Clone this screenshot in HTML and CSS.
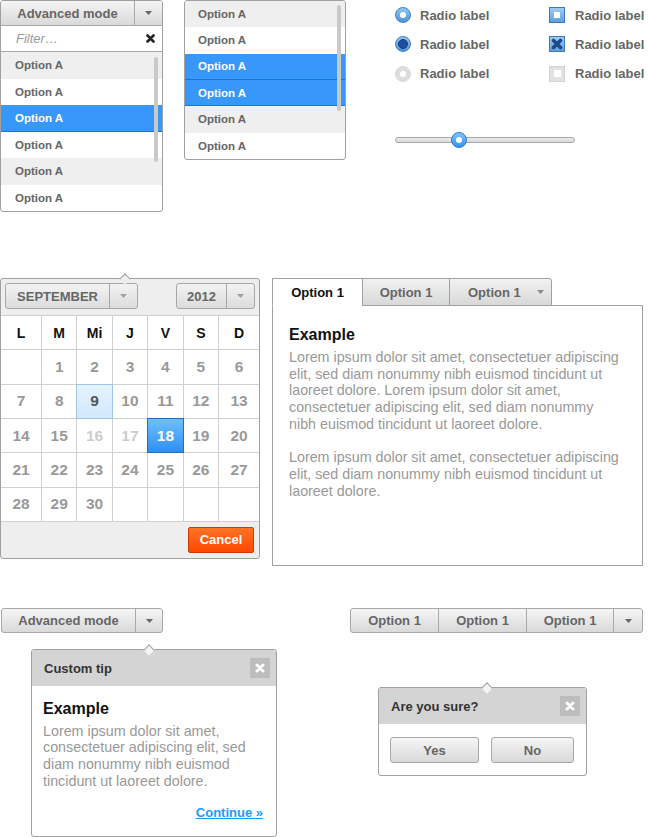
FILE: index.html
```html
<!DOCTYPE html>
<html>
<head>
<meta charset="utf-8">
<link rel="stylesheet" href="styles.css">
</head>
<body>
<div class="page">
  <div class="row1">
    <div class="combo">
      <div class="combo-head">
        <span class="seg grow">Advanced mode</span>
        <span class="seg caret"><svg width="7" height="4" viewBox="0 0 7 4"><path d="M0 0H7L3.5 4Z"/></svg></span>
      </div>
      <div class="filter">
        <span>Filter…</span>
        <svg class="x-dark" width="9" height="9" viewBox="0 0 9 9"><path d="M1.5 1.5L7.5 7.5M7.5 1.5L1.5 7.5"/></svg>
      </div>
      <div class="opt alt">Option A</div>
      <div class="opt">Option A</div>
      <div class="opt sel">Option A</div>
      <div class="opt">Option A</div>
      <div class="opt alt">Option A</div>
      <div class="opt">Option A</div>
      <div class="scroll"></div>
    </div>

    <div class="list">
      <div class="opt alt">Option A</div>
      <div class="opt">Option A</div>
      <div class="opt sel">Option A</div>
      <div class="opt sel">Option A</div>
      <div class="opt alt">Option A</div>
      <div class="opt">Option A</div>
      <div class="scroll"></div>
    </div>

    <div class="controls">
      <div class="choices">
        <div class="choice"><span class="radio"></span>Radio label</div>
        <div class="choice"><span class="check"></span>Radio label</div>
        <div class="choice"><span class="radio on"></span>Radio label</div>
        <div class="choice"><span class="check on"><svg width="12" height="12" viewBox="0 0 12 12"><path d="M2.5 2.5L9.5 9.5M9.5 2.5L2.5 9.5"/></svg></span>Radio label</div>
        <div class="choice"><span class="radio off"></span>Radio label</div>
        <div class="choice"><span class="check off"></span>Radio label</div>
      </div>
      <div class="slider">
        <div class="track"></div>
        <div class="thumb"></div>
      </div>
    </div>
  </div>

  <div class="row2">
    <div class="cal">
      <div class="cal-head">
        <div class="select month">
          <span class="seg grow">SEPTEMBER</span>
          <span class="seg caret"><svg width="7" height="4" viewBox="0 0 7 4"><path d="M0 0H7L3.5 4Z"/></svg></span>
        </div>
        <div class="select year">
          <span class="seg grow">2012</span>
          <span class="seg caret"><svg width="7" height="4" viewBox="0 0 7 4"><path d="M0 0H7L3.5 4Z"/></svg></span>
        </div>
      </div>
      <div class="cal-grid">
        <span class="dow">L</span><span class="dow">M</span><span class="dow">Mi</span><span class="dow">J</span><span class="dow">V</span><span class="dow">S</span><span class="dow">D</span>
        <span></span><span>1</span><span>2</span><span>3</span><span>4</span><span>5</span><span>6</span>
        <span>7</span><span>8</span><span class="today">9</span><span>10</span><span>11</span><span>12</span><span>13</span>
        <span>14</span><span>15</span><span class="dim">16</span><span class="dim">17</span><span class="pick">18</span><span>19</span><span>20</span>
        <span>21</span><span>22</span><span>23</span><span>24</span><span>25</span><span>26</span><span>27</span>
        <span>28</span><span>29</span><span>30</span><span></span><span></span><span></span><span></span>
      </div>
      <div class="cal-foot">
        <div class="cancel">Cancel</div>
      </div>
    </div>

    <div class="tabs">
      <div class="tab-row">
        <div class="tab active">Option 1</div>
        <div class="tab t2">Option 1</div>
        <div class="tab t3">Option 1<svg width="7" height="4" viewBox="0 0 7 4"><path d="M0 0H7L3.5 4Z"/></svg></div>
      </div>
      <div class="tab-body">
        <h2 class="heading">Example</h2>
        <p class="text">Lorem ipsum dolor sit amet, consectetuer adipiscing elit, sed diam nonummy nibh euismod tincidunt ut laoreet dolore. Lorem ipsum dolor sit amet, consectetuer adipiscing elit, sed diam nonummy nibh euismod tincidunt ut laoreet dolore.</p>
        <p class="text">Lorem ipsum dolor sit amet, consectetuer adipiscing elit, sed diam nonummy nibh euismod tincidunt ut laoreet dolore.</p>
      </div>
    </div>
  </div>

  <div class="row3">
    <div class="tip-demo">
      <div class="btn adv">
        <span class="seg grow">Advanced mode</span>
        <span class="seg caret"><svg width="7" height="4" viewBox="0 0 7 4"><path d="M0 0H7L3.5 4Z"/></svg></span>
      </div>
      <div class="pop tip">
        <div class="pop-head">
          <span>Custom tip</span>
          <span class="close"><svg width="10" height="10" viewBox="0 0 10 10"><path d="M2 2L8 8M8 2L2 8"/></svg></span>
        </div>
        <div class="tip-body">
          <h2 class="heading">Example</h2>
          <p class="text">Lorem ipsum dolor sit amet, consectetuer adipiscing elit, sed diam nonummy nibh euismod tincidunt ut laoreet dolore.</p>
          <div class="more"><a class="link" href="#">Continue »</a></div>
        </div>
      </div>
    </div>

    <div class="grp-demo">
      <div class="btn group">
        <span class="seg s1">Option 1</span>
        <span class="seg s2">Option 1</span>
        <span class="seg s3">Option 1</span>
        <span class="seg caret"><svg width="7" height="4" viewBox="0 0 7 4"><path d="M0 0H7L3.5 4Z"/></svg></span>
      </div>
      <div class="pop confirm">
        <div class="pop-head">
          <span>Are you sure?</span>
          <span class="close"><svg width="10" height="10" viewBox="0 0 10 10"><path d="M2 2L8 8M8 2L2 8"/></svg></span>
        </div>
        <div class="confirm-body">
          <div class="btn yes"><span class="seg grow">Yes</span></div>
          <div class="btn no"><span class="seg grow">No</span></div>
        </div>
      </div>
    </div>
  </div>
</div>
</body>
</html>
```

FILE: styles.css
```css
* { box-sizing: border-box; margin: 0; padding: 0; }
body {
  margin: 0;
  font-family: "Liberation Sans", Arial, Helvetica, sans-serif;
  color: #666;
  background: #fff;
}
.page { width: 643px; display: flex; flex-direction: column; }

/* shared */
.seg { display: flex; align-items: center; justify-content: center; }
.grow { flex: 1; }
.caret { border-left: 1px solid #a8a8a8; }
.caret svg { fill: #666; }

/* row 1 */
.row1 { display: flex; align-items: flex-start; height: 212px; }
.combo {
  flex-shrink: 0;
  width: 163px; height: 212px;
  border: 1px solid #a0a0a0; border-radius: 3px;
  overflow: hidden; position: relative; background: #fff;
}
.combo-head {
  display: flex; height: 25px;
  border-bottom: 1px solid #a8a8a8;
  background: linear-gradient(#f5f5f5, #d9d9d9);
  font-size: 13px; font-weight: bold; color: #666;
}
.combo-head .caret { width: 28px; }
.filter {
  height: 26px; border-bottom: 1px solid #a8a8a8;
  display: flex; align-items: center; justify-content: space-between;
  padding: 0 7px 0 15px;
  font-size: 13px; font-style: italic; color: #999;
}
.x-dark { stroke: #222; stroke-width: 2.6; stroke-linecap: round; fill: none; }
.opt {
  height: 26.5px; display: flex; align-items: center;
  padding-left: 14px;
  font-size: 11.5px; font-weight: bold; color: #666;
}
.opt.alt { background: #efefef; }
.opt.sel { background: #3797fb; color: #fff; border-bottom: 1px solid #1f73cc; }
.scroll { position: absolute; width: 4px; background: #c9c9c9; border-radius: 2px; }
.combo .scroll { right: 4px; top: 56px; height: 105px; }
.list {
  flex-shrink: 0;
  width: 162px; height: 160px; margin-left: 21px;
  border: 1px solid #a0a0a0; border-radius: 3px;
  overflow: hidden; position: relative; background: #fff;
}
.list .opt { height: 26.33px; padding-left: 13px; }
.list .scroll { right: 4px; top: 4px; height: 106px; }

.controls { flex-shrink: 0; margin-left: 49px; padding-top: 7px; }
.choices {
  display: grid; grid-template-columns: 154px auto;
  grid-auto-rows: 16px; row-gap: 13.3px;
}
.choice {
  display: flex; align-items: center; gap: 9px;
  font-size: 13px; font-weight: bold; color: #666; white-space: nowrap;
}
.radio {
  width: 16px; height: 16px; border-radius: 50%;
  border: 1px solid #3f80c4;
  background: linear-gradient(#90c6f1, #4f94d8);
  display: flex; align-items: center; justify-content: center;
}
.radio::after { content: ""; width: 6px; height: 6px; border-radius: 50%; background: #fff; }
.radio.on::after { width: 8px; height: 8px; background: #1f4f9e; border: 1px solid #163d7c; }
.radio.off { border-color: #d8d8d8; background: #dedede; }
.check {
  width: 16px; height: 16px; margin-right: 1px;
  border: 1px solid #3d78b8;
  background: linear-gradient(#a0ccf1, #5f9fdc);
  display: flex; align-items: center; justify-content: center;
}
.check::after { content: ""; width: 6px; height: 6px; background: #fff; }
.check.on::after { display: none; }
.check.on svg { stroke: #1c4a86; stroke-width: 3.6; stroke-linecap: round; fill: none; }
.check.off { border-color: #d2d2d2; background: #e2e2e2; }
.check.off::after { width: 7px; height: 7px; }

.slider { position: relative; width: 180px; height: 16px; padding-top: 5px; margin-top: 50.5px; }
.track {
  height: 6px;
  border: 1px solid #a8a8a8; border-radius: 3px;
  background: linear-gradient(#ececec, #d8d8d8);
}
.thumb {
  position: absolute; left: 56px; top: 0;
  width: 16px; height: 16px; border-radius: 50%;
  border: 1px solid #2b7ad0;
  background: linear-gradient(#7cc4ff, #3391f3);
  display: flex; align-items: center; justify-content: center;
}
.thumb::after { content: ""; width: 6px; height: 6px; border-radius: 50%; background: #fff; }

/* row 2 */
.row2 { display: flex; align-items: flex-start; gap: 12px; margin-top: 66px; }
.cal {
  flex-shrink: 0;
  width: 260px; border: 1px solid #a0a0a0; border-radius: 3px;
  background: #eee; position: relative;
}
.cal::before {
  content: ""; position: absolute; left: 119.5px; top: -4.5px;
  width: 7px; height: 7px; background: #eee;
  border-left: 1px solid #a0a0a0; border-top: 1px solid #a0a0a0;
  transform: rotate(45deg);
}
.cal-head { height: 36px; display: flex; justify-content: space-between; padding: 4px 4px 0; }
.select {
  display: flex; height: 26px;
  border: 1px solid #a8a8a8; border-radius: 3px;
  background: linear-gradient(#f3f3f3, #dcdcdc);
  font-size: 13px; font-weight: bold; color: #666;
}
.select.month { width: 133px; }
.select.year { width: 79px; }
.select .caret { width: 28px; }
.select .caret svg { fill: #a0a0a0; }
.cal-grid {
  display: grid;
  grid-template-columns: 40px repeat(5, 1fr) 40px;
  grid-auto-rows: 33.33px; gap: 1px;
  background: #d0d0d0;
  border-top: 1px solid #d0d0d0; border-bottom: 1px solid #d0d0d0;
}
.cal-grid span {
  background: #fff; display: flex; align-items: center; justify-content: center;
  font-size: 15.5px; font-weight: bold; color: #999;
}
.cal-grid .dow { color: #111; font-size: 14px; }
.cal-grid .dim { color: #ccc; }
.cal-grid .today {
  background: linear-gradient(#e6f3ff, #d2e8fb);
  outline: 1px solid #9dc5e8; color: #555; position: relative;
}
.cal-grid .pick {
  background: linear-gradient(#6dc1ff, #2f8ef3);
  outline: 1px solid #1e6fc4; color: #fff; position: relative;
}
.cal-foot { height: 36px; display: flex; justify-content: flex-end; padding: 5px 5px 0; }
.cancel {
  width: 66px; height: 26px;
  border: 1px solid #cf3a00; border-radius: 2px;
  background: linear-gradient(#ff7324, #ff4700);
  color: #fff; font-size: 13px; font-weight: bold;
  display: flex; align-items: center; justify-content: center;
}

.tabs { flex-shrink: 0; width: 371px; }
.tab-row { display: flex; height: 28px; margin-bottom: -1px; position: relative; z-index: 1; }
.tab {
  flex-shrink: 0;
  height: 28px; border: 1px solid #a0a0a0;
  display: flex; align-items: center; justify-content: center;
  font-size: 13px; font-weight: bold; color: #666;
  background: linear-gradient(#f2f2f2, #d8d8d8);
}
.tab + .tab { margin-left: -1px; }
.tab.active { width: 91px; background: #fff; color: #111; border-bottom-color: #fff; }
.tab.t2 { width: 88px; }
.tab.t3 { width: 103px; justify-content: flex-start; padding-left: 18px; gap: 16px; border-top-right-radius: 3px; }
.tab.t3 svg { fill: #888; }
.tab-body { height: 261px; border: 1px solid #a0a0a0; padding: 19px 20px 0 16px; }
.heading { font-size: 16px; line-height: 19px; font-weight: bold; color: #111; }
.text { font-size: 14.3px; line-height: 16.7px; color: #999; }
.tab-body .text { margin-top: 5px; }
.tab-body .text + .text { margin-top: 16.7px; }

/* row 3 */
.row3 { display: flex; justify-content: space-between; align-items: flex-start; margin-top: 42px; }
.tip-demo { flex-shrink: 0; margin-left: 1px; display: flex; flex-direction: column; align-items: flex-start; }
.btn {
  display: flex; height: 25px;
  border: 1px solid #a8a8a8; border-radius: 3px;
  background: linear-gradient(#f5f5f5, #d9d9d9);
  font-size: 13px; font-weight: bold; color: #666;
}
.btn.adv { width: 162px; }
.btn.adv .caret { width: 27px; }

.pop { position: relative; border: 1px solid #a0a0a0; border-radius: 3px; background: #fff; }
.pop::before {
  content: ""; position: absolute; top: -4.5px;
  width: 7px; height: 7px; background: #f4f4f4;
  border-left: 1px solid #a0a0a0; border-top: 1px solid #a0a0a0;
  transform: rotate(45deg);
}
.pop-head {
  height: 36px; background: #d4d4d4; border-radius: 2px 2px 0 0;
  display: flex; align-items: center; justify-content: space-between;
  padding: 0 6px 0 12px;
  font-size: 13px; font-weight: bold; color: #333;
}
.close {
  width: 20px; height: 20px; background: #bdbdbd;
  display: flex; align-items: center; justify-content: center;
}
.close svg { stroke: #fff; stroke-width: 3; stroke-linecap: round; fill: none; }

.tip { width: 246px; height: 188px; margin: 16px 0 0 30px; }
.tip::before { left: 112.5px; }
.tip-body { padding: 12.5px 13px 0 11px; }
.tip-body .text { margin-top: 5px; }
.more { text-align: right; margin-top: 14px; line-height: 17px; }
.link { color: #1a9bff; font-size: 13px; font-weight: bold; text-decoration: underline; }

.grp-demo { flex-shrink: 0; display: flex; flex-direction: column; align-items: flex-start; width: 293px; }
.btn.group { width: 293px; }
.btn.group .s1 { width: 87px; }
.btn.group .s2 { width: 88px; border-left: 1px solid #a8a8a8; }
.btn.group .s3 { width: 87px; border-left: 1px solid #a8a8a8; }
.btn.group .caret { flex: 1; }

.confirm { width: 209px; height: 89px; margin: 54px 0 0 28px; }
.confirm::before { left: 103.5px; }
.confirm-body { display: flex; gap: 12px; padding: 13px 12px 0 11px; }
.btn.yes { width: 89px; height: 26px; }
.btn.no { width: 83px; height: 26px; }
```
